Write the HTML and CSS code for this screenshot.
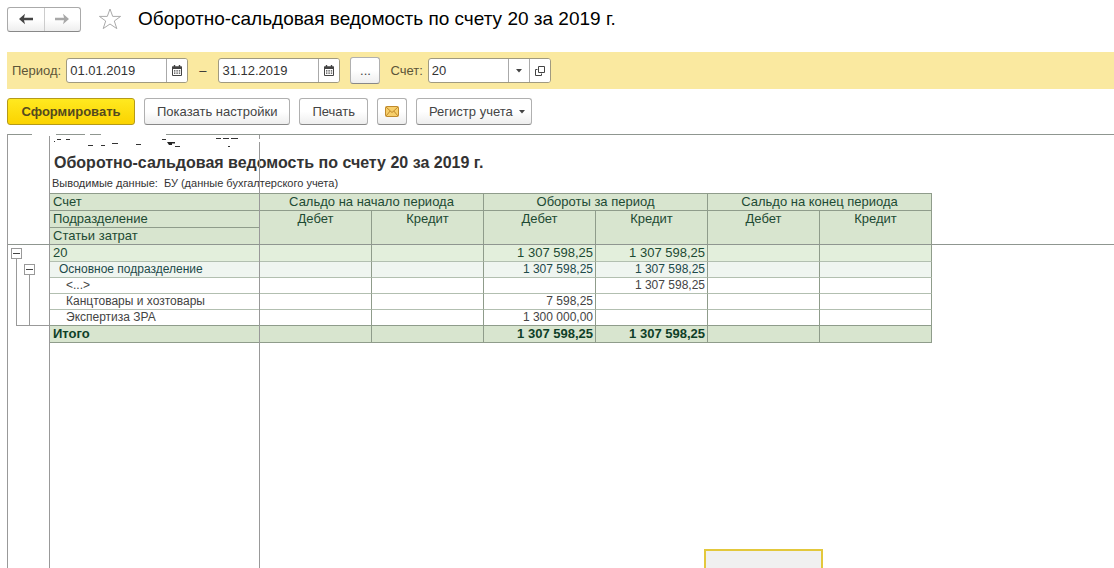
FILE: index.html
```html
<!DOCTYPE html>
<html lang="ru">
<head>
<meta charset="utf-8">
<title>Оборотно-сальдовая ведомость по счету 20 за 2019 г.</title>
<link rel="stylesheet" href="styles.css">
</head>
<body>
<header class="topbar">
  <div class="nav">
    <button class="nav-btn" aria-label="Назад"><svg width="14" height="12" viewBox="0 0 14 12"><path d="M0 6 6 0.8 5 4.8H14V7.2H5L6 11.2Z" fill="#444"/></svg></button>
    <button class="nav-btn" aria-label="Вперед"><svg width="14" height="12" viewBox="0 0 14 12"><path d="M14 6 8 0.8 9 4.8H0V7.2H9L8 11.2Z" fill="#a8a8a8"/></svg></button>
  </div>
  <button class="star" aria-label="В избранное"><svg width="24" height="22" viewBox="0 0 24 22"><path d="M12 1 14.7 8.4H22.6L16.3 13 18.8 20.6 12 16 5.2 20.6 7.7 13 1.4 8.4H9.3Z" fill="#fff" stroke="#aaa" stroke-width="1"/></svg></button>
  <h1 class="page-title">Оборотно-сальдовая ведомость по счету 20 за 2019 г.</h1>
</header>

<section class="filter">
  <label class="label" for="from">Период:</label>
  <div class="field field-date">
    <input id="from" class="input" type="text" value="01.01.2019">
    <button class="field-btn" aria-label="Выбрать начало"><svg width="10" height="11" viewBox="0 0 10 11"><path d="M.5 2H9.5V10.5H.5Z" fill="#fff" stroke="#444"/><path d="M0 1.5H10V4H0Z" fill="#444"/><path d="M2.5 0V2M7.5 0V2" stroke="#444" stroke-width="1.4"/><path d="M2 5.8H8.4M2 8.2H8.4" stroke="#444" stroke-width="1.3" stroke-dasharray="1.4 1"/></svg></button>
  </div>
  <span class="dash">–</span>
  <div class="field field-date">
    <input class="input" type="text" value="31.12.2019" aria-label="Конец периода">
    <button class="field-btn" aria-label="Выбрать конец"><svg width="10" height="11" viewBox="0 0 10 11"><path d="M.5 2H9.5V10.5H.5Z" fill="#fff" stroke="#444"/><path d="M0 1.5H10V4H0Z" fill="#444"/><path d="M2.5 0V2M7.5 0V2" stroke="#444" stroke-width="1.4"/><path d="M2 5.8H8.4M2 8.2H8.4" stroke="#444" stroke-width="1.3" stroke-dasharray="1.4 1"/></svg></button>
  </div>
  <button class="btn btn-icon btn-more">...</button>
  <label class="label" for="account">Счет:</label>
  <div class="field field-account">
    <input id="account" class="input" type="text" value="20">
    <button class="field-btn" aria-label="Список"><svg width="6" height="4" viewBox="0 0 6 4"><path d="M0 0H6L3 3.5Z" fill="#444"/></svg></button>
    <button class="field-btn" aria-label="Открыть"><svg width="10" height="10" viewBox="0 0 10 10"><path d="M3.5 0.5H9.5V6.5H3.5ZM2.5 3.5H0.5V9.5H6.5V7.5" fill="none" stroke="#444"/></svg></button>
  </div>
</section>

<section class="toolbar">
  <button class="btn btn-primary">Сформировать</button>
  <button class="btn">Показать настройки</button>
  <button class="btn">Печать</button>
  <button class="btn btn-icon" aria-label="Отправить по почте"><svg width="14" height="11" viewBox="0 0 14 11"><rect x=".5" y=".5" width="13" height="10" rx="1" fill="#f7cf6b" stroke="#c08a2c"/><path d="M1 1 7 6.5 13 1M1 10 5.2 5M13 10 8.8 5" fill="none" stroke="#c08a2c"/></svg></button>
  <button class="btn btn-menu">Регистр учета <svg width="6" height="4" viewBox="0 0 6 4"><path d="M0 0H6L3 3.5Z" fill="#444"/></svg></button>
</section>

<main class="report">
  <div class="gutter">
    <div class="branch">
      <button class="toggle" aria-label="Свернуть счет"><svg width="9" height="9" viewBox="0 0 9 9"><path d="M1 4.5H8" stroke="#444"/></svg></button>
      <div class="branch branch-inner"><button class="toggle" aria-label="Свернуть подразделение"><svg width="9" height="9" viewBox="0 0 9 9"><path d="M1 4.5H8" stroke="#444"/></svg></button></div>
    </div>
  </div>
  <div class="sheet">
    <h2 class="report-title">Оборотно-сальдовая ведомость по счету 20 за 2019 г.</h2>
    <p class="report-note">Выводимые данные:&nbsp; БУ (данные бухгалтерского учета)</p>
    <table class="ledger">
      <colgroup><col class="col-name"><col span="6"></colgroup>
      <thead>
        <tr><th class="name">Счет</th><th colspan="2">Сальдо на начало периода</th><th colspan="2">Обороты за период</th><th colspan="2">Сальдо на конец периода</th></tr>
        <tr><th class="name">Подразделение</th><th rowspan="2">Дебет</th><th rowspan="2">Кредит</th><th rowspan="2">Дебет</th><th rowspan="2">Кредит</th><th rowspan="2">Дебет</th><th rowspan="2">Кредит</th></tr>
        <tr><th class="name">Статьи затрат</th></tr>
      </thead>
      <tbody>
        <tr class="lvl-1"><td class="name">20</td><td></td><td></td><td>1 307 598,25</td><td>1 307 598,25</td><td></td><td></td></tr>
        <tr class="lvl-2"><td class="name">Основное подразделение</td><td></td><td></td><td>1 307 598,25</td><td>1 307 598,25</td><td></td><td></td></tr>
        <tr class="lvl-3"><td class="name">&lt;...&gt;</td><td></td><td></td><td></td><td>1 307 598,25</td><td></td><td></td></tr>
        <tr class="lvl-3"><td class="name">Канцтовары и хозтовары</td><td></td><td></td><td>7 598,25</td><td></td><td></td><td></td></tr>
        <tr class="lvl-3 last"><td class="name">Экспертиза ЗРА</td><td></td><td></td><td>1 300 000,00</td><td></td><td></td><td></td></tr>
      </tbody>
      <tfoot>
        <tr><td class="name">Итого</td><td></td><td></td><td>1 307 598,25</td><td>1 307 598,25</td><td></td><td></td></tr>
      </tfoot>
    </table>
  </div>
  <svg class="erased" width="260" height="16" viewBox="0 0 260 16" aria-hidden="true">
    <path d="M24 0H48V1H24ZM77 0H82V1H77ZM93 0H158V1H93ZM40 0H43V2H40ZM250 5H253V8H250Z" fill="#fff"/>
    <path d="M49 5.5H53M58 5.5H62M46 7.5H47M80 11.5H85M93 11.5H97M104 9.5H110M128 10.5H133M154 5.5H158M208 4.5H213M215 4.5H221M223 4.5H230M220 12.5H222M167 12.5H172" stroke="#333" fill="none"/>
    <path d="M159 8H167V9.5H164V11H161Z" fill="#222"/>
  </svg>
  <div class="float-box"></div>
</main>
</body>
</html>
```
FILE: styles.css
```css
* { box-sizing: border-box; }
body {
  margin: 0;
  height: 100vh;
  overflow: hidden;
  display: flex;
  flex-direction: column;
  background: #fff;
  color: #444;
  font: 13px/16px "Liberation Sans", Arial, sans-serif;
}
button, input { font: inherit; color: inherit; padding: 0; margin: 0; }
button { display: flex; align-items: center; justify-content: center; }
svg { display: block; flex: none; }

.topbar { display: flex; align-items: center; padding: 6px 7px 0; height: 32px; }
.nav { display: flex; width: 74px; height: 25px; border: 1px solid #aaa; border-bottom-color: #888; border-radius: 3px; background: linear-gradient(#fff 50%, #eee); }
.nav-btn { flex: 1; border: 0; background: none; }
.nav-btn + .nav-btn { border-left: 1px solid #ccc; }
.star { margin: 0 16px 0 17px; border: 0; background: none; }
.page-title { margin: 0; font-size: 19px; line-height: 24px; font-weight: 400; color: #000; white-space: nowrap; }

.filter { display: flex; align-items: center; height: 37px; margin: 20px 0 0 7px; padding-left: 5px; background: #fae9a0; }
.label { color: #5c5538; white-space: nowrap; }
.field { display: flex; height: 25px; margin-left: 5px; border: 1px solid #a09a80; border-radius: 3px; background: #fff; overflow: hidden; }
.field-date { width: 122px; }
.field-account { width: 123px; }
.input { flex: 1; min-width: 0; padding-left: 3px; border: 0; background: none; color: #333; outline: 0; }
.field-btn { width: 21px; border: 0; border-left: 1px solid #aaa; background: #fff; }
.dash { margin: 0 7px 0 11px; color: #333; }

.toolbar { display: flex; gap: 9px; padding: 9px 7px; }
.btn { height: 27px; padding: 0 12px; border: 1px solid #b0b0b0; border-bottom-color: #888; border-radius: 3px; background: linear-gradient(#fff 50%, #eee); white-space: nowrap; }
.btn-primary { width: 128px; border-color: #b59a18; background: linear-gradient(#ffe920, #fbd300); color: #544a1e; font-weight: 700; }
.btn-icon { width: 30px; padding: 0; }
.btn-more { margin: 0 10px; }
.btn-menu { gap: 6px; padding-right: 6px; }

.report { flex: 1; position: relative; display: flex; margin-left: 7px; padding-top: 1px; border-left: 1px solid #999; overflow: hidden; }
.report::before, .report::after { content: ""; position: absolute; left: 0; right: 0; border-top: 1px solid #8f9690; }
.report::before { top: 0; }
.report::after { top: 110px; }
.gutter { flex: none; width: 42px; padding: 113px 0 0 3px; border-right: 1px solid #999; }
.branch { position: relative; height: 78px; }
.branch::before { content: ""; position: absolute; top: 10px; bottom: 0; left: 5px; right: 0; border: solid #999; border-width: 0 0 1px 1px; }
.branch-inner { height: 62px; margin: 5px 0 0 13px; }
.toggle { position: relative; width: 11px; height: 11px; border: 1px solid #999; background: #fff; }

.sheet { flex: 1; position: relative; min-width: 0; }
.sheet::after { content: ""; position: absolute; top: 0; bottom: 0; left: 209px; border-left: 1px solid #999; }
.report-title { margin: 0; padding: 18px 0 0 4px; font-size: 16px; line-height: 20px; color: #333; white-space: nowrap; }
.report-note { margin: 0; padding: 3px 0 3px 2px; font-size: 11px; line-height: 14px; color: #333; }
.erased { position: absolute; top: 0; left: 0; z-index: 1; }

.ledger { width: 882px; table-layout: fixed; border-collapse: separate; border-spacing: 0; border-top: 1px solid #8f9c8b; }
.col-name { width: 210px; }
.ledger tr { height: 17px; }
.ledger th, .ledger td { padding: 0 2px; border: solid #8f9c8b; border-width: 0 1px 1px 0; line-height: 16px; white-space: nowrap; vertical-align: top; }
.ledger th { background: #d8e5cf; color: #1d4a33; font-weight: 400; text-align: center; }
.ledger td { text-align: right; }
.ledger .name { padding-left: 3px; text-align: left; }
.ledger .lvl-1 td { background: #e3efdc; color: #1d4a33; }
.ledger .lvl-2 td { background: #eff5f0; color: #1d4a4a; }
.ledger .lvl-2, .ledger .lvl-3 { height: 16px; font-size: 12px; }
.ledger .lvl-2 td, .ledger .lvl-3 td { line-height: 15px; }
.ledger .lvl-2 .name { padding-left: 9px; }
.ledger .lvl-3 .name { padding-left: 16px; }
.ledger tbody td { border-bottom-color: #b2bfb0; }
.ledger .last td { border-bottom-color: #8f9c8b; }
.ledger tfoot td { background: #d8e5cf; color: #0f4028; font-weight: 700; }

.float-box { position: absolute; left: 696px; bottom: 0; width: 119px; height: 19px; border: 2px solid #e3c83c; border-bottom: 0; background: #f0f0f0; }
```
